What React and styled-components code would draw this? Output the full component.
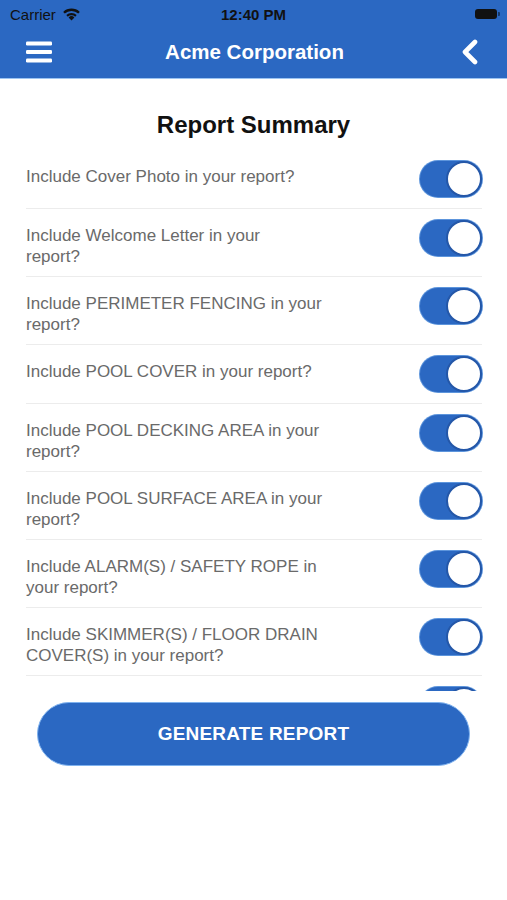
import React from 'react';
import styled, { createGlobalStyle } from 'styled-components';

const items = [
  'Include Cover Photo in your report?',
  'Include Welcome Letter in your\nreport?',
  'Include PERIMETER FENCING in your\nreport?',
  'Include POOL COVER in your report?',
  'Include POOL DECKING AREA in your\nreport?',
  'Include POOL SURFACE AREA in your\nreport?',
  'Include ALARM(S) / SAFETY ROPE in\nyour report?',
  'Include SKIMMER(S) / FLOOR DRAIN\nCOVER(S) in your report?',
  'Include GATES in your report?',
];

const App = () => {
  return (
    <Wrap>
      <GlobalStyle />
      <Header>
        <StatusBar>
          <Carrier>
            Carrier
            <svg width="19" height="14" viewBox="0 0 19 14">
              <path d="M9.5 13.5 L6.6 10.4 A4.2 4.2 0 0 1 12.4 10.4 Z" fill="#111" />
              <path d="M4.3 8.1 A7.5 7.5 0 0 1 14.7 8.1 L13.2 9.7 A5.4 5.4 0 0 0 5.8 9.7 Z" fill="#111" />
              <path d="M1.2 4.9 A12 12 0 0 1 17.8 4.9 L16.2 6.6 A9.7 9.7 0 0 0 2.8 6.6 Z" fill="#111" />
            </svg>
          </Carrier>
          <Time>12:40 PM</Time>
          <Battery />
        </StatusBar>
        <NavBar>
          <IconButton aria-label="menu">
            <svg width="26" height="22" viewBox="0 0 26 22">
              <rect x="0" y="0.5" width="26" height="4" rx="1.2" fill="#fff" />
              <rect x="0" y="9" width="26" height="4" rx="1.2" fill="#fff" />
              <rect x="0" y="17.5" width="26" height="4" rx="1.2" fill="#fff" />
            </svg>
          </IconButton>
          <NavTitle>Acme Corporation</NavTitle>
          <IconButton aria-label="back">
            <svg width="20" height="26" viewBox="0 0 20 26">
              <path d="M15 3 L5 13 L15 23" fill="none" stroke="#fff" strokeWidth="4.6" strokeLinecap="round" strokeLinejoin="round" />
            </svg>
          </IconButton>
        </NavBar>
      </Header>
      <Title>Report Summary</Title>
      <List>
        {items.map((text) => (
          <Row key={text}>
            <Label>{text}</Label>
            <Switch>
              <Knob />
            </Switch>
          </Row>
        ))}
      </List>
      <Footer>
        <GenerateButton>GENERATE REPORT</GenerateButton>
      </Footer>
    </Wrap>
  );
};

export default App;

const GlobalStyle = createGlobalStyle`
  body {
    margin: 0;
    background: #fff;
    font-family: 'Liberation Sans', Arial, sans-serif;
  }
`;

const Wrap = styled.div`
  width: 507px;
  height: 900px;
  background: #fff;
  display: flex;
  flex-direction: column;
`;

const Header = styled.div`
  background-color: #2b68c2;
  border-bottom: 1px solid #9cc4f2;
`;

const StatusBar = styled.div`
  height: 28px;
  display: flex;
  align-items: center;
  justify-content: space-between;
  padding: 0 10px 0 10px;
`;

const Carrier = styled.div`
  display: flex;
  align-items: center;
  gap: 6px;
  font-size: 15px;
  color: #111;
  width: 90px;
`;

const Time = styled.div`
  font-size: 15px;
  font-weight: bold;
  color: #111;
`;

const Battery = styled.div`
  width: 22px;
  height: 10px;
  background: #111;
  border-radius: 3px;
  margin-left: 68px;
  position: relative;
  &::after {
    content: '';
    position: absolute;
    right: -3px;
    top: 3px;
    width: 2px;
    height: 4px;
    border-radius: 0 1px 1px 0;
    background: rgba(0, 0, 0, 0.45);
  }
`;

const NavBar = styled.div`
  height: 50px;
  display: flex;
  align-items: center;
  justify-content: space-between;
  padding: 0 24px 0 26px;
`;

const IconButton = styled.div`
  width: 26px;
  display: flex;
  align-items: center;
  justify-content: center;
  margin-top: -2px;
`;

const NavTitle = styled.div`
  color: #fff;
  font-size: 20.5px;
  font-weight: bold;
  margin-top: -2px;
`;

const Title = styled.div`
  text-align: center;
  font-size: 24px;
  font-weight: bold;
  line-height: 28px;
  color: #111;
  padding: 32px 0 11px;
`;

const List = styled.div`
  height: 541px;
  overflow: hidden;
  padding: 0 25px 0 26px;
`;

const Row = styled.div`
  display: flex;
  justify-content: space-between;
  align-items: flex-start;
  padding: 10px 0 9px;
  border-bottom: 1px solid #ececec;
`;

const Label = styled.div`
  white-space: pre-line;
  padding-top: 6px;
  font-size: 17px;
  line-height: 21px;
  color: #6a6a6a;
`;

const Switch = styled.div`
  flex-shrink: 0;
  width: 62px;
  height: 36px;
  margin: 1px 0 2px;
  border-radius: 18px;
  background: #2b68c2;
  box-shadow: 0 0 0 1px #5d95dc;
  display: flex;
  align-items: center;
  justify-content: flex-end;
`;

const Knob = styled.div`
  width: 32px;
  height: 32px;
  border-radius: 50%;
  background: #fff;
  border: 2px solid #2457a8;
`;

const Footer = styled.div`
  display: flex;
  justify-content: center;
  padding-top: 11px;
`;

const GenerateButton = styled.div`
  width: 431px;
  height: 62px;
  border-radius: 32px;
  background: #2b68c2;
  border: 1px solid #7fb2ee;
  display: flex;
  align-items: center;
  justify-content: center;
  color: #fff;
  font-size: 19px;
  font-weight: bold;
  letter-spacing: 0.2px;
`;
